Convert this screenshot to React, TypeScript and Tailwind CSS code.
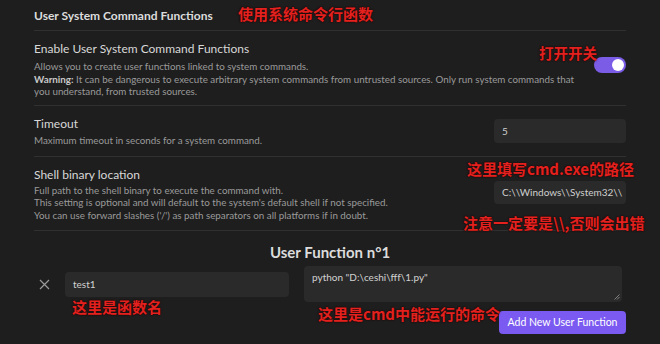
import React from "react";

const font = { fontFamily: 'Lato, "Noto Sans", sans-serif' };
const cjk = { fontFamily: '"Noto Sans CJK SC", "Noto Sans", sans-serif', textShadow: "0 0 2px #2a0000, 0 0 1px #000" };

function Note({ children, className }: { children: React.ReactNode; className: string }) {
  return (
    <div className={"absolute whitespace-nowrap font-bold text-[#e3211f] leading-none " + className} style={cjk}>
      {children}
    </div>
  );
}

export default function App() {
  return (
    <div className="relative w-[660px] h-[344px] overflow-hidden bg-[#1e1e1e] text-[#dadada]" style={font}>
      <div className="pl-[34px] w-[626px] flex flex-col">
        <div className="h-[31px] flex items-center pt-[1px] text-[12px] font-bold text-[#dcdcdc] border-b border-[#303030]">
          User System Command Functions
        </div>

        <div className="flex items-center border-b border-[#303030] h-[75px]">
          <div className="flex-1 min-w-0 flex flex-col pt-[2px]">
            <div className="text-[12px] leading-[17px] text-[#d8d8d8]">Enable User System Command Functions</div>
            <div className="text-[9.8px] leading-[12.5px] text-[#9a9a9a] mt-[3px] whitespace-nowrap">
              Allows you to create user functions linked to system commands.
              <br />
              <span className="font-bold text-[#c8c8c8]">Warning:</span> It can be dangerous to execute arbitrary system
              commands from untrusted sources. Only run system commands that
              <br />
              you understand, from trusted sources.
            </div>
          </div>
          <div className="shrink-0 w-[32px] h-[16px] rounded-full bg-[#7b5ce6] flex items-center justify-end pr-[2px] mb-[7px]">
            <div className="w-[12px] h-[12px] rounded-full bg-white" />
          </div>
        </div>

        <div className="flex items-center border-b border-[#303030] h-[51px]">
          <div className="flex-1 min-w-0 flex flex-col">
            <div className="text-[12px] leading-[17px] text-[#d8d8d8]">Timeout</div>
            <div className="text-[9.8px] leading-[12.5px] text-[#9a9a9a] mt-[2px]">
              Maximum timeout in seconds for a system command.
            </div>
          </div>
          <div className="shrink-0 w-[132px] h-[24px] rounded-[4px] bg-[#2a2a2a] flex items-center px-[8px] text-[10px] text-[#cfcfcf]">
            5
          </div>
        </div>

        <div className="flex items-center border-b border-[#303030] h-[74px]">
          <div className="flex-1 min-w-0 flex flex-col">
            <div className="text-[12px] leading-[17px] text-[#d8d8d8]">Shell binary location</div>
            <div className="text-[9.8px] leading-[12.5px] text-[#9a9a9a] mt-[1px] whitespace-nowrap">
              Full path to the shell binary to execute the command with.
              <br />
              This setting is optional and will default to the system&apos;s default shell if not specified.
              <br />
              You can use forward slashes (&apos;/&apos;) as path separators on all platforms if in doubt.
            </div>
          </div>
          <div className="shrink-0 w-[132px] h-[23px] rounded-[4px] bg-[#2a2a2a] flex items-center px-[8px] text-[10px] text-[#cfcfcf] mb-[2px] overflow-hidden whitespace-nowrap">
            C:\\Windows\\System32\\
          </div>
        </div>

        <div className="h-[30px] flex items-end justify-center text-[15px] font-bold text-[#dcdcdc] leading-[18px]">
          User Function n°1
        </div>

        <div className="flex items-start mt-[5px]">
          <div className="w-[31px] h-[36px] flex items-center justify-start pl-[5px]">
            <svg width="11" height="11" viewBox="0 0 11 11" fill="none" stroke="#9a9a9a" strokeWidth="1.2">
              <path d="M1 1 L10 10 M10 1 L1 10" />
            </svg>
          </div>
          <div className="w-[224px] h-[25px] mt-[6px] rounded-[4px] bg-[#2a2a2a] flex items-center px-[8px] text-[10px] text-[#d2d2d2]">
            test1
          </div>
          <div className="relative ml-[15px] w-[318px] h-[36px] rounded-[4px] bg-[#2a2a2a] px-[8px] pt-[4px] text-[10px] text-[#d2d2d2]">
            python &quot;D:\ceshi\fff\1.py&quot;
            <svg className="absolute right-[2px] bottom-[2px]" width="6" height="6" viewBox="0 0 6 6" stroke="#8a8a8a" strokeWidth="0.9">
              <path d="M5.5 0.5 L0.5 5.5 M5.5 3 L3 5.5" />
            </svg>
          </div>
        </div>

        <div className="flex justify-end mt-[9px]">
          <div className="w-[127px] h-[23px] rounded-[4px] bg-[#7a5af0] flex items-center justify-center text-[10.5px] text-white">
            Add New User Function
          </div>
        </div>
      </div>

      <Note className="left-[238px] top-[6px] text-[15px]">使用系统命令行函数</Note>
      <Note className="left-[539px] top-[46px] text-[14.5px]">打开开关</Note>
      <Note className="left-[467px] top-[161px] text-[15px]">这里填写cmd.exe的路径</Note>
      <Note className="left-[463px] top-[215px] text-[15px]">注意一定要是\\,否则会出错</Note>
      <Note className="left-[72px] top-[299px] text-[15px]">这里是函数名</Note>
      <Note className="left-[318px] top-[306px] text-[15px]">这里是cmd中能运行的命令</Note>
    </div>
  );
}
